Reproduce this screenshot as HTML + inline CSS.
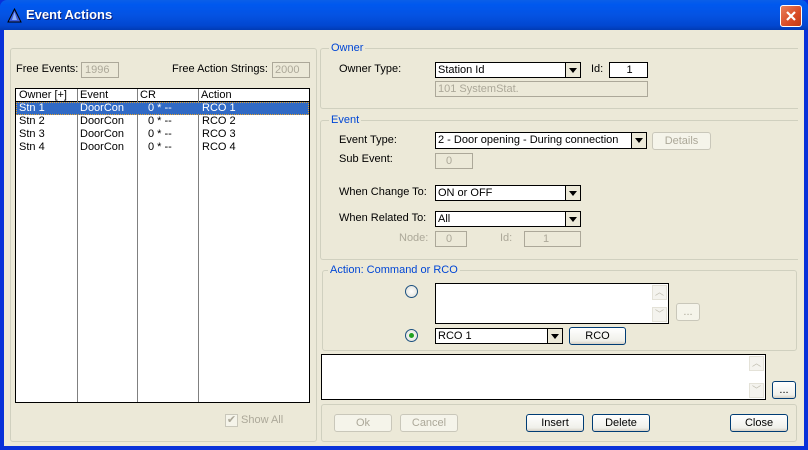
<!DOCTYPE html><html><head><style>
*{box-sizing:border-box;margin:0;padding:0}
body{width:808px;height:450px;overflow:hidden;background:#0831d9;font-family:"Liberation Sans",Tahoma,sans-serif;font-size:11px;color:#000;position:relative}
.a{position:absolute}
#title{left:0;top:0;width:808px;height:30px;background:linear-gradient(#0a5fe8,#0058ee 15%,#0453e3 50%,#0247d0 85%,#013bb4);border-radius:7px 7px 0 0}
#client{left:4px;top:30px;width:800px;height:416px;background:#ECE9D8}
.g{position:absolute;border:1px solid #d0d0bf;border-radius:3px}
.gl{position:absolute;background:#ECE9D8;color:#0046d5;padding:0 2px;font-size:11px;line-height:12px}
.t{position:absolute;white-space:nowrap;line-height:13px}
.dis{color:#aca899}
.box{position:absolute;background:#fff;border:1px solid #000;line-height:15px;padding-left:2px;white-space:nowrap}
.dbox{position:absolute;border:1px solid #aca899;background:#ECE9D8;color:#aca899;line-height:15px;white-space:nowrap}
.dd{position:absolute;right:0;top:0;bottom:0;width:15px;border-left:1px solid #000;background:#ECE9D8}
.dd:after{content:"";position:absolute;left:3px;top:5px;border-left:4px solid transparent;border-right:4px solid transparent;border-top:5px solid #000}
.btn{position:absolute;border:1px solid #003c74;border-radius:3px;background:linear-gradient(#fff,#f0f0ea 80%,#d6d0c5);text-align:center;line-height:16px}
.dbtn{position:absolute;border:1px solid #c9c7ba;border-radius:3px;background:#f5f4ea;color:#aca899;text-align:center;line-height:16px}
.sb{position:absolute;right:1px;width:15px;height:15px;background:#f4f3ee;border:1px solid #e4e2d8;color:#c0bdb0;font-size:9px;text-align:center;line-height:13px}
.radio{position:absolute;width:13px;height:13px;border-radius:50%;border:1px solid #1c5180;background:radial-gradient(#fff,#dcdcd4)}
</style></head><body>
<div id="title" class="a">
 <svg class="a" style="left:7px;top:8px" width="15" height="15"><polygon points="7.5,1 14,14 1,14" fill="#3a5ad8" stroke="#000" stroke-width="1"/><polygon points="7.5,4 10,12 5,12" fill="#8fb0f8"/></svg>
 <div class="a" style="left:26px;top:7px;color:#fff;font-weight:bold;font-size:13px;text-shadow:1px 1px #0a1e7a">Event Actions</div>
 <div class="a" style="left:780px;top:5px;width:22px;height:22px;border:1px solid #fff;border-radius:3px;background:linear-gradient(135deg,#e8805c,#d84b25 60%,#c03a15)">
  <svg width="20" height="20" class="a" style="left:0;top:0"><path d="M6 6L14 14M14 6L6 14" stroke="#fff" stroke-width="2.2"/></svg></div>
</div>
<div id="client" class="a"></div>

<div class="g" style="left:10px;top:48px;width:307px;height:394px"></div>
<div class="t" style="left:16px;top:63px">Free Events:</div>
<div class="dbox" style="left:81px;top:62px;width:38px;height:16px;padding-left:3px">1996</div>
<div class="t" style="left:172px;top:63px">Free Action Strings:</div>
<div class="dbox" style="left:272px;top:62px;width:38px;height:16px;padding-left:2px">2000</div>
<div class="a" style="left:15px;top:88px;width:295px;height:315px;background:#fff;border:1px solid #000">
 <div class="a" style="left:0;top:0;width:293px;height:13px;border-bottom:1px solid #000"></div>
 <div class="a" style="left:61px;top:0;width:1px;height:313px;background:#808080"></div>
 <div class="a" style="left:121px;top:0;width:1px;height:313px;background:#808080"></div>
 <div class="a" style="left:182px;top:0;width:1px;height:313px;background:#808080"></div>
 <div class="t" style="left:3px;top:0">Owner [+]</div><div class="t" style="left:64px;top:0">Event</div><div class="t" style="left:124px;top:0">CR</div><div class="t" style="left:185px;top:0">Action</div>
 <div class="a" style="left:0;top:13px;width:293px;height:13px;background:#316ac5;border:1px dotted #e0a030"></div>
 <div class="t" style="left:3px;top:13px;color:#fff">Stn 1</div><div class="t" style="left:64px;top:13px;color:#fff">DoorCon</div><div class="t" style="left:132px;top:13px;color:#fff">0 * --</div><div class="t" style="left:186px;top:13px;color:#fff">RCO 1</div>
 <div class="t" style="left:3px;top:26px">Stn 2</div><div class="t" style="left:64px;top:26px">DoorCon</div><div class="t" style="left:132px;top:26px">0 * --</div><div class="t" style="left:186px;top:26px">RCO 2</div>
 <div class="t" style="left:3px;top:39px">Stn 3</div><div class="t" style="left:64px;top:39px">DoorCon</div><div class="t" style="left:132px;top:39px">0 * --</div><div class="t" style="left:186px;top:39px">RCO 3</div>
 <div class="t" style="left:3px;top:52px">Stn 4</div><div class="t" style="left:64px;top:52px">DoorCon</div><div class="t" style="left:132px;top:52px">0 * --</div><div class="t" style="left:186px;top:52px">RCO 4</div>
</div>
<div class="a" style="left:225px;top:414px;width:13px;height:13px;border:1px solid #c9c7ba;background:#f5f4ea;color:#aca899;font-size:11px;line-height:11px;text-align:center">✔</div>
<div class="t dis" style="left:241px;top:414px">Show All</div>

<div class="g" style="left:320px;top:48px;width:478px;height:61px;border-right:none;border-radius:3px 0 0 3px"></div>
<div class="gl" style="left:329px;top:42px">Owner</div>
<div class="t" style="left:339px;top:63px">Owner Type:</div>
<div class="box" style="left:435px;top:62px;width:146px;height:16px">Station Id<div class="dd"></div></div>
<div class="t" style="left:591px;top:63px">Id:</div>
<div class="box" style="left:609px;top:62px;width:39px;height:16px;text-align:center">1</div>
<div class="dbox" style="left:435px;top:81px;width:213px;height:16px;padding-left:2px">101 SystemStat.</div>

<div class="g" style="left:320px;top:120px;width:478px;height:140px;border-right:none;border-radius:3px 0 0 3px"></div>
<div class="gl" style="left:329px;top:114px">Event</div>
<div class="t" style="left:339px;top:134px">Event Type:</div>
<div class="box" style="left:435px;top:132px;width:212px;height:17px">2 - Door opening - During connection<div class="dd"></div></div>
<div class="dbtn" style="left:652px;top:132px;width:59px;height:18px">Details</div>
<div class="t" style="left:339px;top:153px">Sub Event:</div>
<div class="dbox" style="left:435px;top:153px;width:38px;height:16px;padding-left:10px">0</div>
<div class="t" style="left:339px;top:186px">When Change To:</div>
<div class="box" style="left:435px;top:185px;width:146px;height:16px">ON or OFF<div class="dd"></div></div>
<div class="t" style="left:339px;top:212px">When Related To:</div>
<div class="box" style="left:435px;top:211px;width:146px;height:16px">All<div class="dd"></div></div>
<div class="t dis" style="left:399px;top:232px">Node:</div>
<div class="dbox" style="left:435px;top:231px;width:32px;height:16px;padding-left:10px">0</div>
<div class="t dis" style="left:500px;top:232px">Id:</div>
<div class="dbox" style="left:524px;top:231px;width:57px;height:16px;padding-left:18px">1</div>

<div class="g" style="left:322px;top:270px;width:475px;height:81px"></div>
<div class="gl" style="left:328px;top:264px">Action: Command or RCO</div>
<div class="radio" style="left:405px;top:285px"></div>
<div class="box" style="left:435px;top:283px;width:234px;height:41px"><div class="sb" style="top:1px">︿</div><div class="sb" style="bottom:1px">﹀</div></div>
<div class="dbtn" style="left:676px;top:303px;width:24px;height:18px">...</div>
<div class="radio" style="left:405px;top:329px"></div>
<div class="a" style="left:409px;top:333px;width:5px;height:5px;border-radius:50%;background:#21a121"></div>
<div class="box" style="left:435px;top:328px;width:128px;height:16px">RCO 1<div class="dd"></div></div>
<div class="btn" style="left:569px;top:327px;width:57px;height:18px">RCO</div>

<div class="box" style="left:321px;top:354px;width:445px;height:46px"><div class="sb" style="top:1px">︿</div><div class="sb" style="bottom:1px">﹀</div></div>
<div class="btn" style="left:772px;top:381px;width:24px;height:18px">...</div>

<div class="g" style="left:321px;top:404px;width:476px;height:38px"></div>
<div class="dbtn" style="left:334px;top:414px;width:58px;height:18px">Ok</div>
<div class="dbtn" style="left:400px;top:414px;width:58px;height:18px">Cancel</div>
<div class="btn" style="left:526px;top:414px;width:58px;height:18px">Insert</div>
<div class="btn" style="left:592px;top:414px;width:58px;height:18px">Delete</div>
<div class="btn" style="left:730px;top:414px;width:58px;height:18px">Close</div>
</body></html>
